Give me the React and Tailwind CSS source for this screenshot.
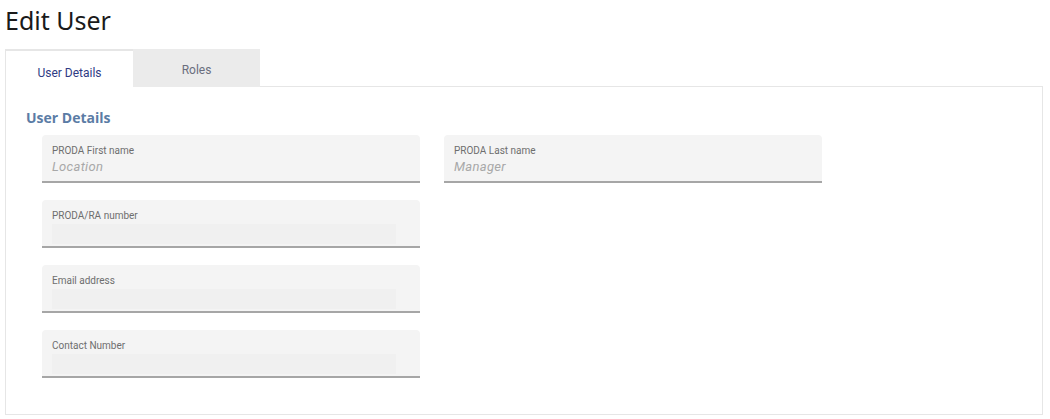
const Field = ({ label, value, box }) => (
  <div className="w-[378px] h-[48px] rounded-t-[4px] bg-[#f4f4f4] border-b-2 border-[#a6a6a6] pl-[10px] pt-[9px]">
    <div className="text-[10px] leading-[14px] text-[#6e6e6e] font-['Roboto',sans-serif]">
      {label}
    </div>
    {value ? (
      <div className="text-[13px] leading-[18px] italic text-[#a8a8a8] font-['Roboto',sans-serif] tracking-[0.3px]">
        {value}
      </div>
    ) : (
      box && <div className="mt-[1px] w-[344px] h-[20px] bg-[#f0f0f0]" />
    )}
  </div>
);

export default function App() {
  return (
    <div className="w-[1050px] h-[419px] bg-white font-['Open_Sans',sans-serif]">
      <h1 className="pl-[5px] pt-[3px] h-[49px] text-[25px] leading-[34px] text-[#1a1a1a] font-['Noto_Sans',sans-serif]">
        Edit User
      </h1>

      <div className="flex ml-[5px]">
        <div className="w-[128px] h-[38px] border-t-2 border-[#1f3b83] border-l border-[#e6e6e6] bg-white flex items-center justify-center pt-[7px] text-[12px] text-[#2f3b84] font-['Roboto',sans-serif]">
          User Details
        </div>
        <div className="w-[127px] h-[38px] bg-[#ebebeb] flex items-start justify-center pt-[12px] text-[12px] text-[#6a6e7e] font-['Roboto',sans-serif]">
          Roles
        </div>
        <div className="flex-1 mr-[7px] border-b border-[#e6e6e6]" />
      </div>

      <div className="ml-[5px] mr-[7px] h-[328px] border-l border-r border-b border-[#e6e6e6] pt-[21px]">
        <h2 className="pl-[20px] text-[14px] leading-[20px] font-bold text-[#5b7ca5]">
          User Details
        </h2>
        <div className="mt-[7px] ml-[36px] flex gap-[24px] items-start">
          <div className="flex flex-col gap-[17px]">
            <Field label="PRODA First name" value="Location" />
            <Field label="PRODA/RA number" box />
            <Field label="Email address" box />
            <Field label="Contact Number" box />
          </div>
          <Field label="PRODA Last name" value="Manager" />
        </div>
      </div>
    </div>
  );
}
